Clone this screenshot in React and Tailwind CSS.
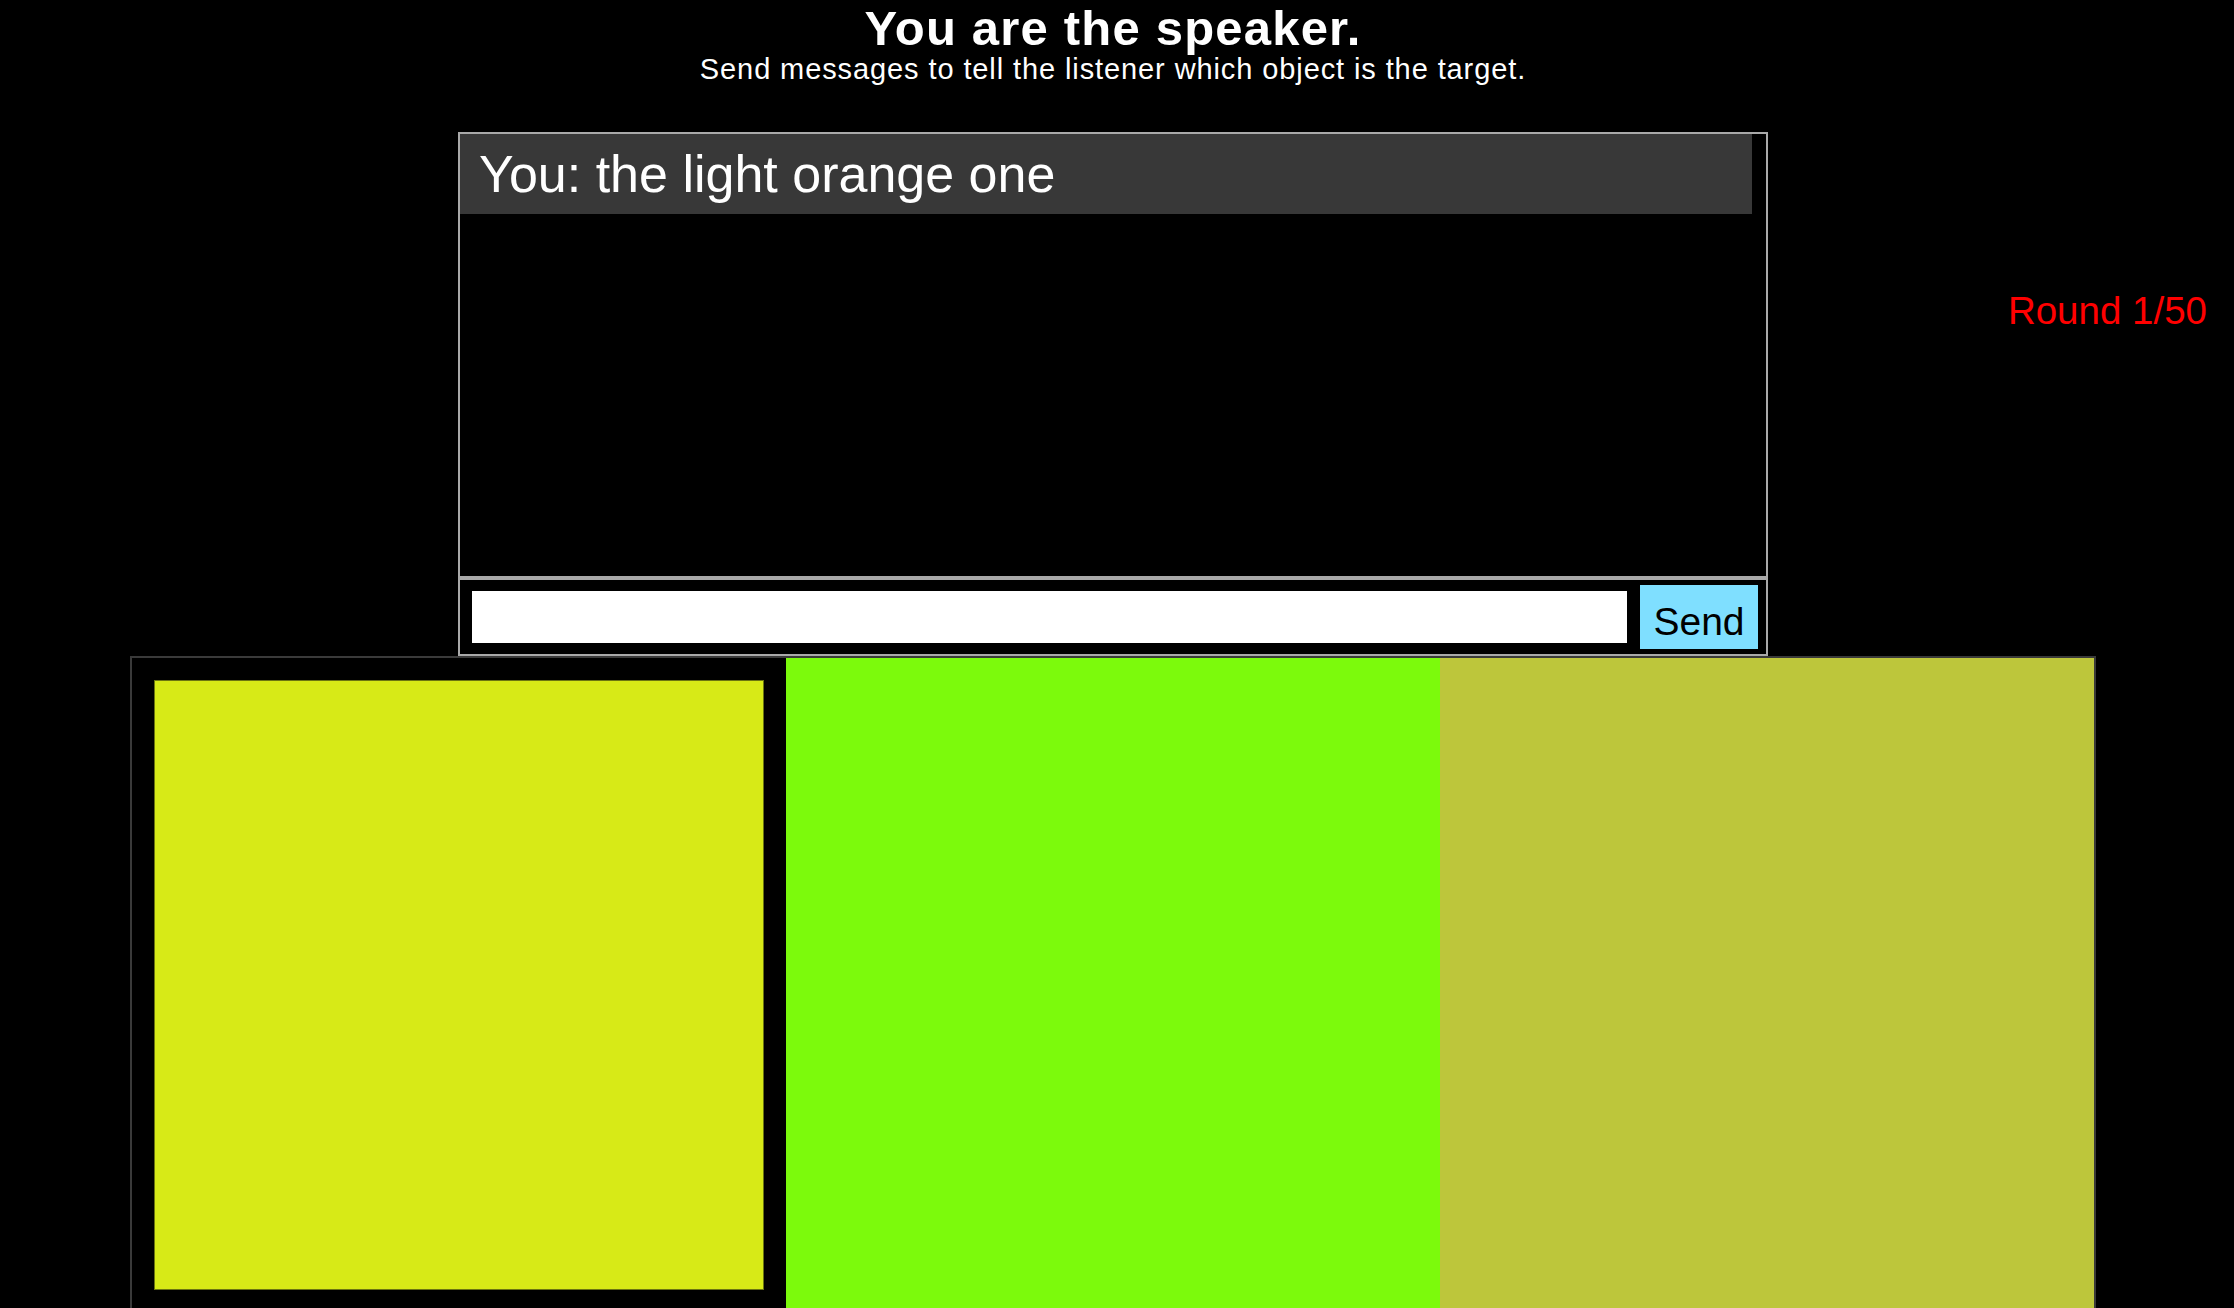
const App = () => {
  return (
    <div className="w-[2234px] h-[1308px] overflow-hidden bg-black text-white font-['Liberation_Sans',Arial,sans-serif]">
      <div className="h-[132px] pr-[8px] text-center">
        <div className="pt-[4px] text-[49px] leading-[49px] font-bold tracking-[1.2px]">
          You are the speaker.
        </div>
        <div className="mt-[2px] text-[29px] leading-[29px] tracking-[0.9px]">
          Send messages to tell the listener which object is the target.
        </div>
      </div>

      <div className="flex items-start">
        <div className="ml-[458px] w-[1310px]">
          <div className="h-[446px] border-2 border-[#a9a9a9] bg-black">
            <div className="mr-[14px] h-[80px] bg-[#383838] pl-[19px] text-[52px] leading-[80px] whitespace-nowrap">
              You: the light orange one
            </div>
          </div>
          <div className="h-[78px] border-2 border-[#a9a9a9] flex items-center pl-[12px] pr-[8px] gap-[13px]">
            <input
              type="text"
              className="w-[1155px] h-[52px] bg-white text-black outline-none px-2 text-[24px]"
            />
            <button className="w-[118px] h-[64px] bg-[#7fdfff] text-black text-[39px] leading-none flex items-center justify-center pt-[8px]">
              Send
            </button>
          </div>
        </div>
        <div className="ml-auto mr-[27px] mt-[157px] text-[38.5px] leading-[44px] text-[#ff0000] whitespace-nowrap">
          Round 1/50
        </div>
      </div>

      <div className="ml-[130px] w-[1966px] border-2 border-b-0 border-[#3a3a3a] grid grid-cols-3">
        <div className="h-[654px] bg-black p-[22px]">
          <div className="w-full h-full bg-[#d7ea17] border border-[#6b7510]" />
        </div>
        <div className="h-[654px] bg-[#7cfa0c]" />
        <div className="h-[654px] bg-[#bdc63b]" />
      </div>
    </div>
  );
};

export default App;
